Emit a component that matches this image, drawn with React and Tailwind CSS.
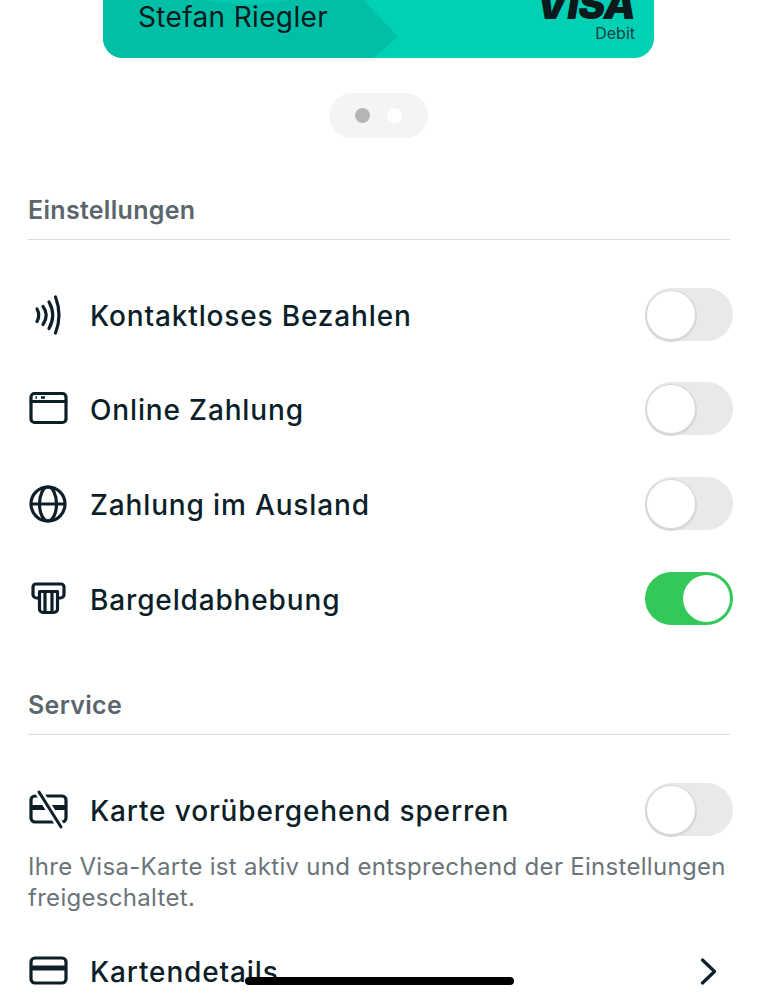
const font = { fontFamily: 'Inter, "Noto Sans", sans-serif' };

const ContactlessIcon = () => (
  <svg width="40" height="40" viewBox="0 0 40 40" fill="none" stroke="#0c1f29" strokeWidth="3.200" strokeLinecap="round">
    <path d="M9 14q3.500 6 0 12.500" />
    <path d="M15 11.500q6.500 8.500 0 18" />
    <path d="M21 7q7.500 13 0 26.500" />
    <path d="M27.500 2q7 18 0 36" />
  </svg>
);

const BrowserIcon = () => (
  <svg width="40" height="40" viewBox="0 0 40 40" fill="none" stroke="#0c1f29" strokeWidth="3.200" strokeLinecap="round" strokeLinejoin="round">
    <rect x="3" y="4.500" width="35" height="29" rx="3.500" />
    <path d="M3 12.500h35" strokeWidth="2.800" />
    <path d="M7.500 8.500h1.500M13 8.500h4" strokeWidth="2.500" strokeLinecap="butt" />
  </svg>
);

const GlobeIcon = () => (
  <svg width="40" height="40" viewBox="0 0 40 40" fill="none" stroke="#0c1f29" strokeWidth="3.200">
    <circle cx="20" cy="20" r="17" />
    <ellipse cx="20" cy="20" rx="8.500" ry="17" />
    <path d="M3 20h34" />
  </svg>
);

const AtmIcon = () => (
  <svg width="40" height="40" viewBox="0 0 40 40" fill="none" stroke="#0c1f29" strokeWidth="3.200" strokeLinecap="round" strokeLinejoin="round">
    <path d="M11.500 19H8.500A3.500 3.500 0 0 1 5 15.500V8a3 3 0 0 1 3-3h25a3 3 0 0 1 3 3v7.500a3.500 3.500 0 0 1-3.500 3.500H29.500" />
    <path d="M11.500 12.500h18V30a3.500 3.500 0 0 1-3.500 3.500H15a3.500 3.500 0 0 1-3.500-3.500z" />
    <path d="M17 12.500v21M24 12.500v21" />
  </svg>
);

const BlockedCardIcon = () => (
  <svg width="40" height="40" viewBox="0 0 40 40" fill="none" stroke="#0c1f29" strokeWidth="3.200" strokeLinecap="round" strokeLinejoin="round">
    <rect x="3" y="6" width="35" height="26" rx="4" />
    <path d="M3 17.500h35" strokeWidth="5" strokeLinecap="butt" />
    <path d="M11 2l22 35" stroke="#ffffff" strokeWidth="8" strokeLinecap="butt" />
    <path d="M11 2l22 35" strokeWidth="3" />
  </svg>
);

const CardIcon = () => (
  <svg width="40" height="40" viewBox="0 0 40 40" fill="none" stroke="#0c1f29" strokeWidth="3.200" strokeLinejoin="round">
    <rect x="3" y="7" width="35" height="25" rx="4" />
    <path d="M3 17h35" strokeWidth="5" />
  </svg>
);

const Toggle = ({ on }) =>
  on ? (
    <div className="flex h-[53px] w-[88px] shrink-0 items-center justify-end rounded-full bg-[#34c759] pr-[3px]">
      <div className="h-[47px] w-[47px] rounded-full bg-white" />
    </div>
  ) : (
    <div className="flex h-[53px] w-[88px] shrink-0 items-center rounded-full bg-[#e9e9eb] pl-[2px]">
      <div className="h-[48px] w-[48px] rounded-full bg-white shadow-[0_1px_0_2px_#d8d8d8]" />
    </div>
  );

const Row = ({ icon, label, on, className = '' }) => (
  <div className={`flex h-[53px] items-center ${className}`}>
    <div className="flex w-[40px] shrink-0 justify-center">{icon}</div>
    <div className="ml-[22px] flex-1 pt-[3px] text-[28px] font-medium tracking-[0.85px] text-[#0c1f29]">{label}</div>
    <Toggle on={on} />
  </div>
);

const SectionTitle = ({ children }) => (
  <div className="mr-[3px] border-b border-[#d9dbdc] pb-[14px] text-[25px] leading-[30px] font-semibold tracking-[0.3px] text-[#5b666c]">
    {children}
  </div>
);

export default function App() {
  return (
    <div className="relative h-[999px] w-[757px] overflow-hidden bg-white" style={font}>
      {/* card, cut off by the top of the screen */}
      <div className="relative mx-auto h-[58px] w-[551px] overflow-hidden rounded-b-[20px] bg-[#00d1b5]">
        <svg className="absolute inset-0" width="551" height="58" viewBox="0 0 551 58">
          <path d="M0 0h261l34 37-25 21H0z" fill="#00bfa6" />
          <ellipse cx="144" cy="-6" rx="52" ry="10" fill="#00cbb0" />
        </svg>
        <div className="relative flex h-full justify-between pr-[19px] pl-[35px] text-[#0a1a1c]">
          <div className="text-[28px] leading-[34px] tracking-[0.35px]">Stefan Riegler</div>
          <div className="flex flex-col items-end">
            <div className="-mt-[16px] text-[41px] leading-[40px] font-black tracking-[-1px] italic">VISA</div>
            <div className="text-[16px] leading-[18px] text-[#21403f]">Debit</div>
          </div>
        </div>
      </div>

      <div className="mt-[35px] flex justify-center">
        <div className="flex h-[45px] w-[99px] items-center justify-center gap-[17px] rounded-full bg-[#f4f4f4]">
          <div className="h-[15px] w-[15px] rounded-full bg-[#b5b5b5]" />
          <div className="h-[15px] w-[15px] rounded-full bg-white" />
        </div>
      </div>

      <div className="mt-[57px] pr-[24px] pl-[28px]">
        <SectionTitle>Einstellungen</SectionTitle>
        <Row className="mt-[48px]" icon={<ContactlessIcon />} label="Kontaktloses Bezahlen" />
        <Row className="mt-[41px]" icon={<BrowserIcon />} label="Online Zahlung" />
        <Row className="mt-[42px]" icon={<GlobeIcon />} label="Zahlung im Ausland" />
        <Row className="mt-[42px]" icon={<AtmIcon />} label="Bargeldabhebung" on />

        <div className="mt-[65px]">
          <SectionTitle>Service</SectionTitle>
        </div>
        <Row className="mt-[48px]" icon={<BlockedCardIcon />} label="Karte vorübergehend sperren" />
        <p className="mt-[15px] text-[24px] leading-[31px] tracking-[0.3px] text-[#6b7479]">
          Ihre Visa-Karte ist aktiv und entsprechend der Einstellungen freigeschaltet.
        </p>
        <div className="mt-[31px] flex h-[53px] items-center">
          <div className="flex w-[40px] shrink-0 justify-center"><CardIcon /></div>
          <div className="ml-[22px] flex-1 pt-[3px] text-[28px] font-medium tracking-[0.85px] text-[#0c1f29]">Kartendetails</div>
          <svg className="mr-[14px]" width="20" height="28" viewBox="0 0 20 28" fill="none" stroke="#0c1f29" strokeWidth="3.200" strokeLinecap="round" strokeLinejoin="round">
            <path d="M3.500 3l12 11.500-12 11.500" />
          </svg>
        </div>
      </div>

      {/* home indicator */}
      <div className="absolute top-[977px] left-[245px] h-[8px] w-[269px] rounded-full bg-black" />
    </div>
  );
}
